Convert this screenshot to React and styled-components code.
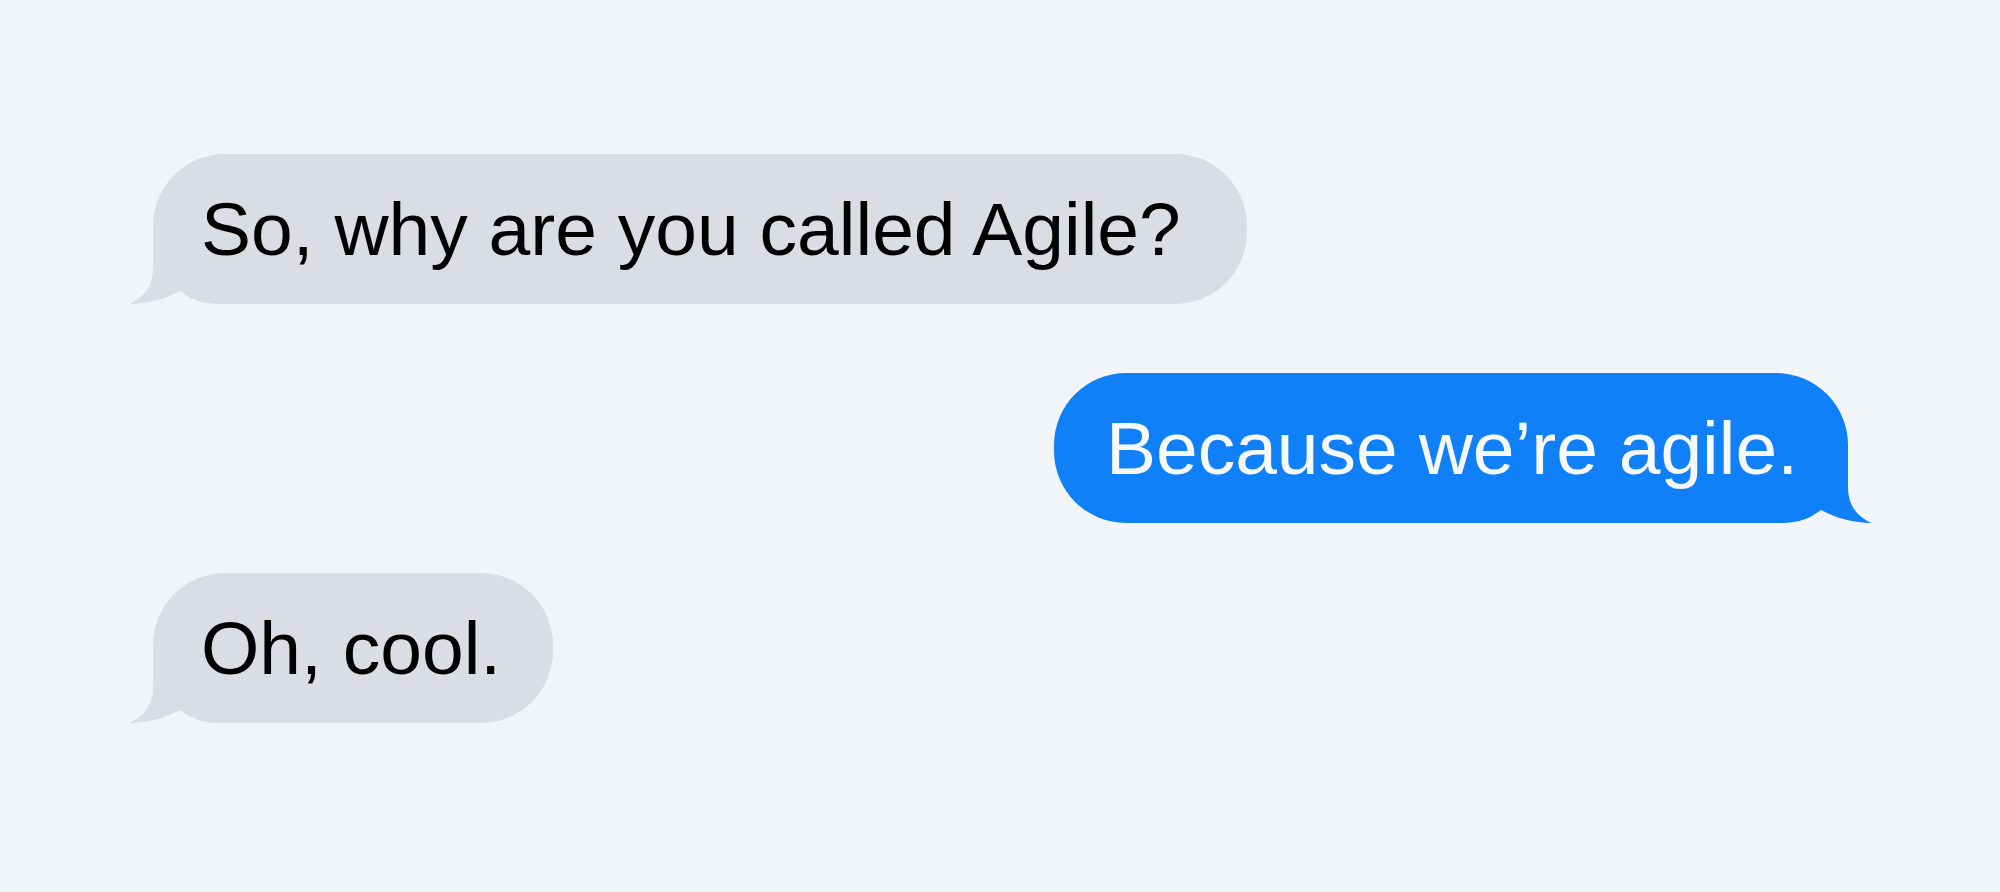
import React from "react";
import styled, { createGlobalStyle } from "styled-components";

const GlobalStyle = createGlobalStyle`
  html, body {
    margin: 0;
    padding: 0;
    background-color: #f2f5f8;
  }
`;

const ThreadStyle = styled.div`
  min-height: 100vh;
  box-sizing: border-box;
  padding: 154px 152px 0 153px;
  display: flex;
  flex-direction: column;
  font-family: "Liberation Sans", Arial, sans-serif;
`;

const RowStyle = styled.div`
  display: flex;
  justify-content: ${props => (props.$mine ? "flex-end" : "flex-start")};
  margin-top: ${props => props.$gap || 0}px;
`;

const BubbleStyle = styled.div`
  position: relative;
  box-sizing: border-box;
  height: 150px;
  display: flex;
  align-items: center;
  padding: 0 ${props => props.$pr || 50}px 0 ${props => props.$pl || 50}px;
  border-radius: 72px;
  font-size: 75px;
  line-height: 1;
  white-space: nowrap;
  background-color: ${props => (props.$mine ? "#0f80f7" : "#dadde3")};
  color: ${props => (props.$mine ? "#f7f8fa" : "#000")};
`;

const TextStyle = styled.span`
  position: relative;
  z-index: 1;
`;

const TailStyle = styled.svg`
  position: absolute;
  bottom: 0;
  width: 100px;
  height: 80px;
  ${props => (props.$mine ? "right: -24px; transform: scaleX(-1);" : "left: -24px;")}
`;

// the little hook at the bottom corner of a bubble
const Tail = ({ mine }) => (
  <TailStyle $mine={mine} viewBox="0 0 100 80">
    <path
      d="M24 0 L24 44 C24 62 15 74 0 80 C18 80 36 75 51 67 C62 75 72 80 90 80 L100 80 L100 0 Z"
      fill={mine ? "#0f80f7" : "#dadde3"}
    />
  </TailStyle>
);

const Message = ({ mine, text, gap, pl, pr }) => (
  <RowStyle $mine={mine} $gap={gap}>
    <BubbleStyle $mine={mine} $pl={pl} $pr={pr}>
      <Tail mine={mine} />
      <TextStyle>{text}</TextStyle>
    </BubbleStyle>
  </RowStyle>
);

const App = () => {
  return (
    <>
      <GlobalStyle />
      <ThreadStyle>
        <Message text="So, why are you called Agile?" pl={48} pr={66} />
        <Message mine text="Because we’re agile." gap={69} pl={52} pr={50} />
        <Message text="Oh, cool." gap={50} pl={48} pr={52} />
      </ThreadStyle>
    </>
  );
};

export default App;
